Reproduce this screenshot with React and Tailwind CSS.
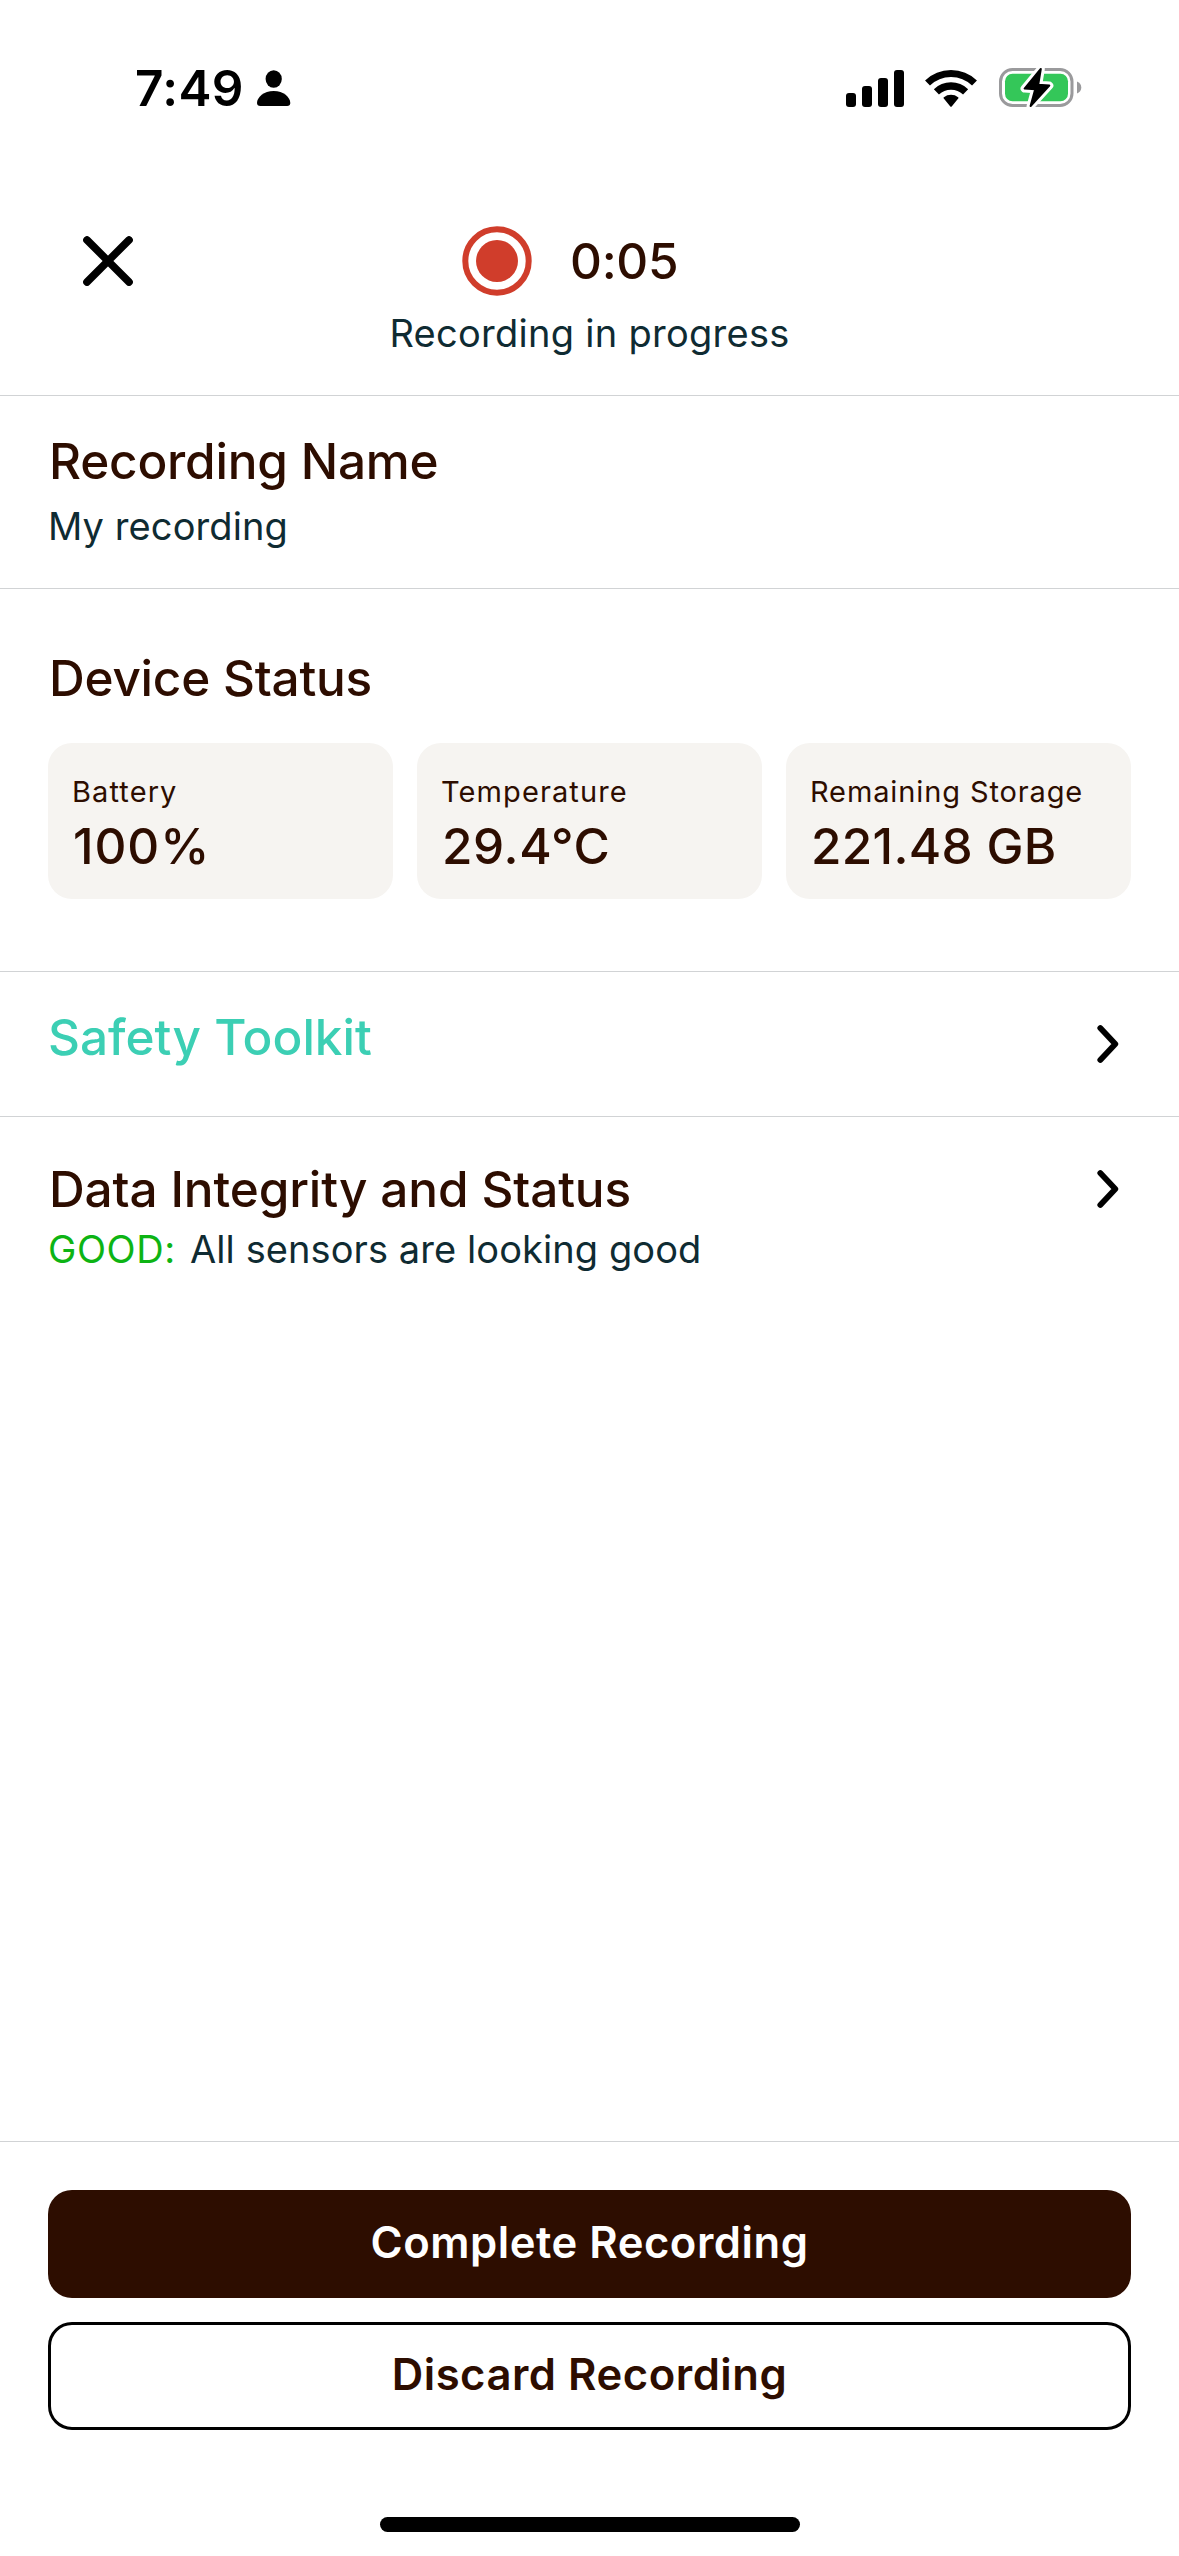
function PersonIcon() {
  return (
    <svg className="h-9 w-[34px]" viewBox="0 0 34 36" aria-hidden="true">
      <ellipse cx="16.7" cy="9" rx="8.1" ry="8.7" />
      <path d="M16.7 21C26.5 21 33.3 27.2 33.3 33c0 2-1.2 3-3.2 3H3.3C1.2 36 0 35 0 33c0-5.800 6.900-12 16.700-12z" />
    </svg>
  );
}

function SignalIcon() {
  return (
    <svg className="h-[37px] w-[58px]" viewBox="0 0 58 37" aria-hidden="true">
      <rect x="0" y="23" width="10" height="14" rx="3" />
      <rect x="16" y="16" width="10" height="21" rx="3" />
      <rect x="32" y="8" width="10" height="29" rx="3" />
      <rect x="48" y="0" width="10" height="37" rx="3" />
    </svg>
  );
}

function WifiIcon() {
  return (
    <svg className="h-[38px] w-[52px]" viewBox="0 0 52 38" fill="none" aria-hidden="true">
      <path d="M2.500 14.000A33.600 33.600 0 0 1 49.500 14.000" stroke="#000" strokeWidth="7" />
      <path d="M11.400 22.900A21 21 0 0 1 40.600 22.900" stroke="#000" strokeWidth="7.300" />
      <path d="M18.800 29.600a1 1 0 0 1 .1-1.400a11.700 11.700 0 0 1 14.200 0a1 1 0 0 1 .1 1.400L26.700 37.400a1 1 0 0 1-1.400 0z" fill="#000" />
    </svg>
  );
}

function BatteryIcon() {
  const bolt = "M45.800 5L29.600 24.600L40.200 25.200L35.600 42L54.300 21.600L43.200 20.800Z";
  return (
    <svg className="h-12 w-[90px]" viewBox="0 0 90 48" fill="none" aria-hidden="true">
      <rect x="5.500" y="5.500" width="71.500" height="36" rx="12" stroke="#9a9a9c" strokeWidth="3" />
      <path d="M82 17.500c2.600 1 4.300 3.300 4.300 6s-1.700 5-4.300 6z" fill="#9a9a9c" />
      <rect x="10" y="9.700" width="63" height="27.600" rx="7.500" fill="#34c759" />
      <path d={bolt} fill="#fff" stroke="#fff" strokeWidth="8" strokeLinejoin="round" />
      <path d={bolt} fill="#000" stroke="#000" strokeWidth="2" strokeLinejoin="round" />
    </svg>
  );
}

function CloseIcon() {
  return (
    <svg className="size-[50px]" viewBox="0 0 50 50" fill="none" aria-hidden="true">
      <path d="M4 4L46 46M46 4L4 46" stroke="#000" strokeWidth="7.600" strokeLinecap="round" />
    </svg>
  );
}

function RecordIcon() {
  return (
    <svg className="size-[70px]" viewBox="0 0 70 70" fill="none" aria-hidden="true">
      <circle cx="35" cy="35" r="31.700" stroke="#d03d2b" strokeWidth="6" />
      <circle cx="35" cy="35" r="21" fill="#d03d2b" />
    </svg>
  );
}

function ChevronIcon() {
  return (
    <svg className="h-[38px] w-[22px]" viewBox="0 0 22 38" fill="none" aria-hidden="true">
      <path d="M3.300 3.100L18.300 19L3.300 34.900" stroke="#000" strokeWidth="5.800" strokeLinecap="round" strokeLinejoin="round" />
    </svg>
  );
}

function StatusBar() {
  return (
    <div className="flex h-[176px] shrink-0 items-center justify-between pr-[94px] pl-[135px]">
      <div className="flex items-center">
        <span className="w-[122px] text-[49.5px] leading-[60px] font-semibold tracking-[0.4px] text-black">7:49</span>
        <PersonIcon />
      </div>
      <div className="flex items-center">
        <SignalIcon />
        <span className="ml-[21px]"><WifiIcon /></span>
        <span className="ml-[18px]"><BatteryIcon /></span>
      </div>
    </div>
  );
}

function Header() {
  return (
    <header className="grid h-[220px] shrink-0 grid-cols-[1fr_auto_1fr] items-start border-b border-[#d1d3d5]">
      <button className="mt-[60px] ml-[83px] justify-self-start" aria-label="Close">
        <CloseIcon />
      </button>
      <div className="flex flex-col items-center pt-[50px]">
        <div className="flex w-[255px] items-center gap-[38px]">
          <RecordIcon />
          <span className="text-[49.5px] leading-[70px] font-medium tracking-[-0.3px] text-[#2d0d00]">0:05</span>
        </div>
        <p className="mt-[13px] text-[38px] leading-[48px] tracking-[0.27px] whitespace-nowrap text-[#0f2b32]">Recording in progress</p>
      </div>
    </header>
  );
}

function StatCard({ label, labelClass, value, valueClass }) {
  return (
    <div className="h-[156px] rounded-3xl bg-[#f6f4f1] pt-[30px] pl-6 whitespace-nowrap text-[#2d0d00]">
      <p className={`text-[29px] leading-[38px] ${labelClass}`}>{label}</p>
      <p className={`mt-[5px] pl-px text-[49.5px] leading-[60px] font-medium ${valueClass}`}>{value}</p>
    </div>
  );
}

export default function App() {
  return (
    <div className="flex h-[2556px] w-[1179px] flex-col overflow-hidden bg-white font-['Inter',sans-serif]">
      <StatusBar />
      <Header />

      <section className="h-[193px] shrink-0 border-b border-[#d1d3d5] px-12 pt-[35px]">
        <h2 className="pl-px text-[49.5px] leading-[60px] font-medium tracking-[-0.22px] text-[#2d0d00]">Recording Name</h2>
        <p className="mt-[11px] text-[38px] leading-[48px] tracking-[0.09px] text-[#0f2b32]">My recording</p>
      </section>

      <section className="h-[383px] shrink-0 border-b border-[#d1d3d5] px-12 pt-[59px]">
        <h2 className="pl-px text-[49.5px] leading-[60px] font-medium tracking-[-0.24px] text-[#2d0d00]">Device Status</h2>
        <div className="mt-[35px] grid grid-cols-3 gap-6">
          <StatCard label="Battery" labelClass="tracking-[1.1px]" value="100%" valueClass="tracking-[0.9px]" />
          <StatCard label="Temperature" labelClass="tracking-[1.1px]" value="29.4°C" valueClass="tracking-[0.6px]" />
          <StatCard label="Remaining Storage" labelClass="tracking-[0.88px]" value="221.48 GB" valueClass="tracking-[0.3px]" />
        </div>
      </section>

      <section className="flex h-[145px] shrink-0 items-center justify-between border-b border-[#d1d3d5] pr-[60px] pl-12">
        <h2 className="pb-3.5 text-[49.5px] leading-[60px] font-medium text-[#3ccfb4]">Safety Toolkit</h2>
        <ChevronIcon />
      </section>

      <section className="grow pt-[42px] pr-[60px] pl-12">
        <div className="flex items-center justify-between">
          <h2 className="pl-px text-[49.5px] leading-[60px] font-medium tracking-[-0.14px] text-[#2d0d00]">Data Integrity and Status</h2>
          <ChevronIcon />
        </div>
        <p className="mt-1.5 flex text-[38px] leading-[48px] text-[#0f2b32]">
          <span className="w-[142px] tracking-[0.6px] text-[#0db414]">GOOD:</span>
          <span className="tracking-[0.08px]">All sensors are looking good</span>
        </p>
      </section>

      <footer className="flex h-[415px] shrink-0 flex-col items-center border-t border-[#d1d3d5] px-12 pt-12">
        <button className="h-[108px] w-full shrink-0 rounded-3xl bg-[#2d0d00] pb-0.5 text-[43.6px] leading-[60px] font-semibold tracking-[0.52px] text-white">
          Complete Recording
        </button>
        <button className="mt-6 h-[108px] w-full shrink-0 rounded-3xl border-[3px] border-black pb-0.5 text-[43.6px] leading-[60px] font-semibold tracking-[0.52px] text-[#2d0d00]">
          Discard Recording
        </button>
        <div className="mt-[87px] h-[15px] w-[420px] shrink-0 rounded-full bg-black" />
      </footer>
    </div>
  );
}
